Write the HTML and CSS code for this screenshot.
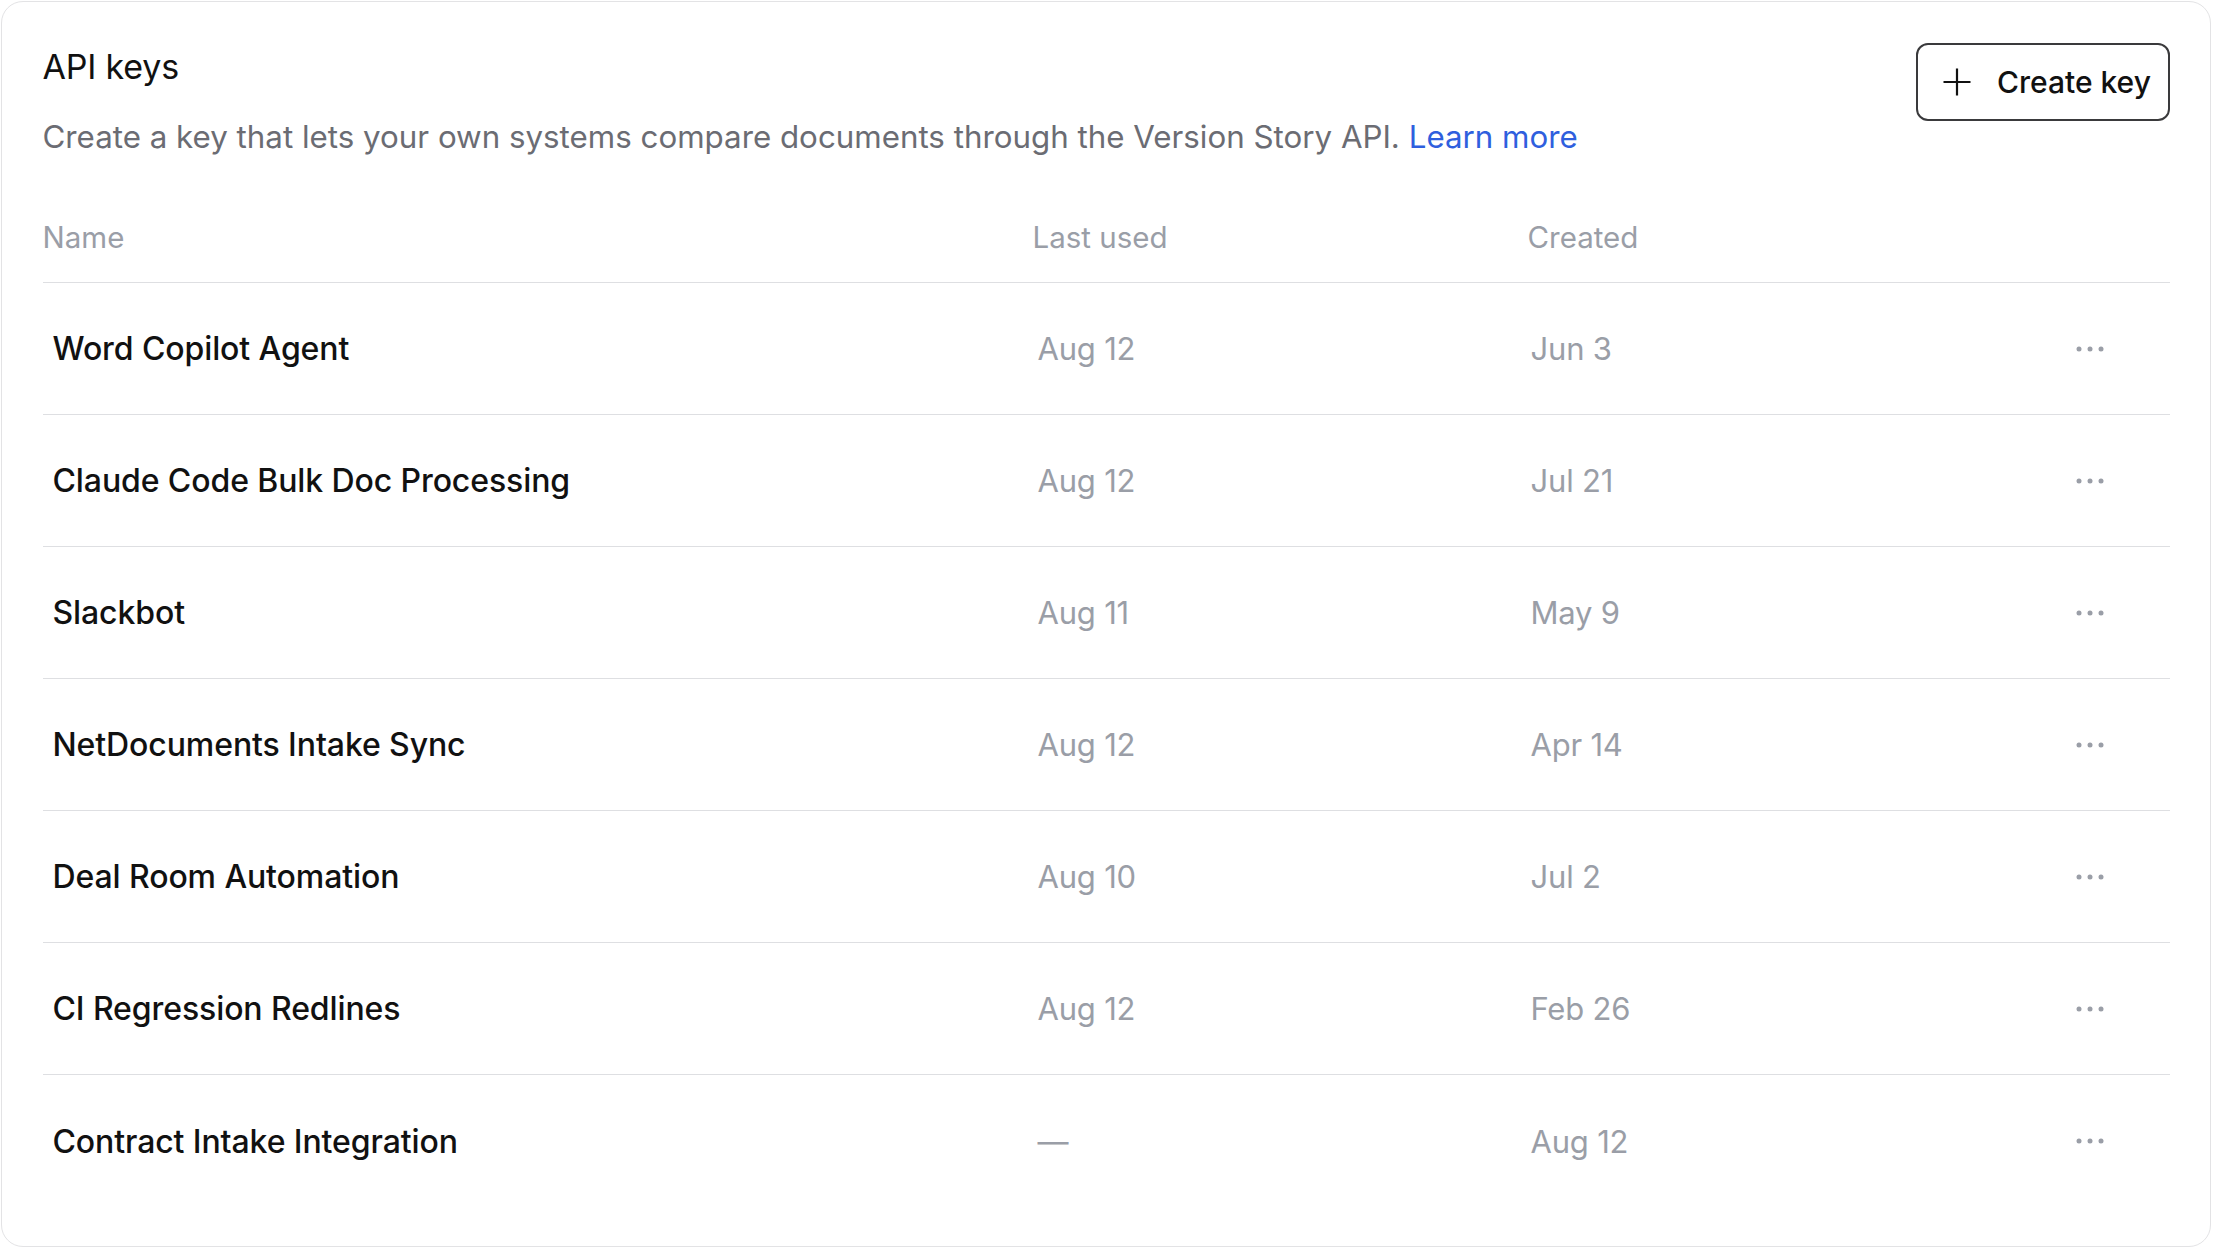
FILE: index.html
```html
<!DOCTYPE html>
<html lang="en">
<head>
<meta charset="utf-8">
<title>API keys</title>
<link rel="stylesheet" href="styles.css">
</head>
<body>
<section class="card">
  <div class="top">
    <div class="intro">
      <h1 class="title">API keys</h1>
      <p class="desc">Create a key that lets your own systems compare documents through the Version Story API. <a class="link" href="#">Learn more</a></p>
    </div>
    <button class="btn" type="button">
      <svg class="plus" viewBox="0 0 30 30" width="30" height="30" aria-hidden="true"><path d="M15 1.5V28.5M1.5 15H28.5" stroke="#111" stroke-width="2.2" fill="none"/></svg>
      <span>Create key</span>
    </button>
  </div>
  <div class="table">
    <div class="row head">
      <div class="cell">Name</div>
      <div class="cell">Last used</div>
      <div class="cell">Created</div>
      <div class="cell"></div>
    </div>
    <div class="row">
      <div class="cell name">Word Copilot Agent</div>
      <div class="cell date">Aug 12</div>
      <div class="cell date created">Jun 3</div>
      <div class="cell more"><svg viewBox="0 0 32 8" width="32" height="8"><circle cx="5" cy="4" r="2.5"/><circle cx="16" cy="4" r="2.5"/><circle cx="27" cy="4" r="2.5"/></svg></div>
    </div>
    <div class="row">
      <div class="cell name">Claude Code Bulk Doc Processing</div>
      <div class="cell date">Aug 12</div>
      <div class="cell date created">Jul 21</div>
      <div class="cell more"><svg viewBox="0 0 32 8" width="32" height="8"><circle cx="5" cy="4" r="2.5"/><circle cx="16" cy="4" r="2.5"/><circle cx="27" cy="4" r="2.5"/></svg></div>
    </div>
    <div class="row">
      <div class="cell name">Slackbot</div>
      <div class="cell date">Aug 11</div>
      <div class="cell date created">May 9</div>
      <div class="cell more"><svg viewBox="0 0 32 8" width="32" height="8"><circle cx="5" cy="4" r="2.5"/><circle cx="16" cy="4" r="2.5"/><circle cx="27" cy="4" r="2.5"/></svg></div>
    </div>
    <div class="row">
      <div class="cell name">NetDocuments Intake Sync</div>
      <div class="cell date">Aug 12</div>
      <div class="cell date created">Apr 14</div>
      <div class="cell more"><svg viewBox="0 0 32 8" width="32" height="8"><circle cx="5" cy="4" r="2.5"/><circle cx="16" cy="4" r="2.5"/><circle cx="27" cy="4" r="2.5"/></svg></div>
    </div>
    <div class="row">
      <div class="cell name">Deal Room Automation</div>
      <div class="cell date">Aug 10</div>
      <div class="cell date created">Jul 2</div>
      <div class="cell more"><svg viewBox="0 0 32 8" width="32" height="8"><circle cx="5" cy="4" r="2.5"/><circle cx="16" cy="4" r="2.5"/><circle cx="27" cy="4" r="2.5"/></svg></div>
    </div>
    <div class="row">
      <div class="cell name">CI Regression Redlines</div>
      <div class="cell date">Aug 12</div>
      <div class="cell date created">Feb 26</div>
      <div class="cell more"><svg viewBox="0 0 32 8" width="32" height="8"><circle cx="5" cy="4" r="2.5"/><circle cx="16" cy="4" r="2.5"/><circle cx="27" cy="4" r="2.5"/></svg></div>
    </div>
    <div class="row last">
      <div class="cell name">Contract Intake Integration</div>
      <div class="cell date">—</div>
      <div class="cell date created">Aug 12</div>
      <div class="cell more"><svg viewBox="0 0 32 8" width="32" height="8"><circle cx="5" cy="4" r="2.5"/><circle cx="16" cy="4" r="2.5"/><circle cx="27" cy="4" r="2.5"/></svg></div>
    </div>
  </div>
</section>
</body>
</html>
```
FILE: styles.css
```css
* { box-sizing: border-box; }
html, body { margin: 0; padding: 0; background: #ffffff; }
body {
  font-family: Inter, "Liberation Sans", sans-serif;
  color: #111111;
  padding: 1px 2px 1px 1px;
}
.card {
  height: 1246px;
  border: 1.5px solid #e3e3e5;
  border-radius: 22px;
  background: #fff;
  padding: 40.5px 40px 40px 40.5px;
}
.top {
  display: flex;
  justify-content: space-between;
  align-items: flex-start;
}
.title {
  margin: 0;
  font-size: 34px;
  font-weight: 400;
  line-height: 48px;
  letter-spacing: -0.2px;
  color: #111;
}
.desc {
  margin: 26px 0 0;
  font-size: 31.3px;
  line-height: 40px;
  color: #6b6c73;
}
.link { color: #2f5fde; text-decoration: none; }
.btn {
  flex: none;
  display: flex;
  align-items: center;
  justify-content: flex-start;
  gap: 25px;
  height: 78px;
  width: 254px;
  padding: 0 0 0 24px;
  border: 2px solid #3a3a3c;
  border-radius: 12px;
  background: #fff;
  font-family: Inter, "Liberation Sans", sans-serif;
  font-size: 30px;
  font-weight: 500;
  color: #111;
  white-space: nowrap;
}
.plus { flex: none; }
.table { margin-top: 60.5px; }
.row {
  display: grid;
  grid-template-columns: 990px 495px 1fr 100px;
  align-items: center;
  height: 132px;
  padding-right: 30px;
  border-bottom: 1.5px solid #dedfe2;
}
.row.head {
  height: auto;
  padding-bottom: 25px;
}
.row.last { border-bottom: none; }
.head .cell {
  font-size: 29.5px;
  line-height: 40px;
  color: #9a9ea7;
}
.name {
  padding-left: 10px;
  font-size: 32px;
  font-weight: 500;
  color: #111;
  letter-spacing: -0.1px;
}
.date {
  padding-left: 5px;
  font-size: 31px;
  color: #9a9ea7;
  letter-spacing: -0.2px;
}
.date.created { padding-left: 3px; }
.more {
  display: flex;
  justify-content: center;
}
.more svg { fill: #9a9ea7; }
```
